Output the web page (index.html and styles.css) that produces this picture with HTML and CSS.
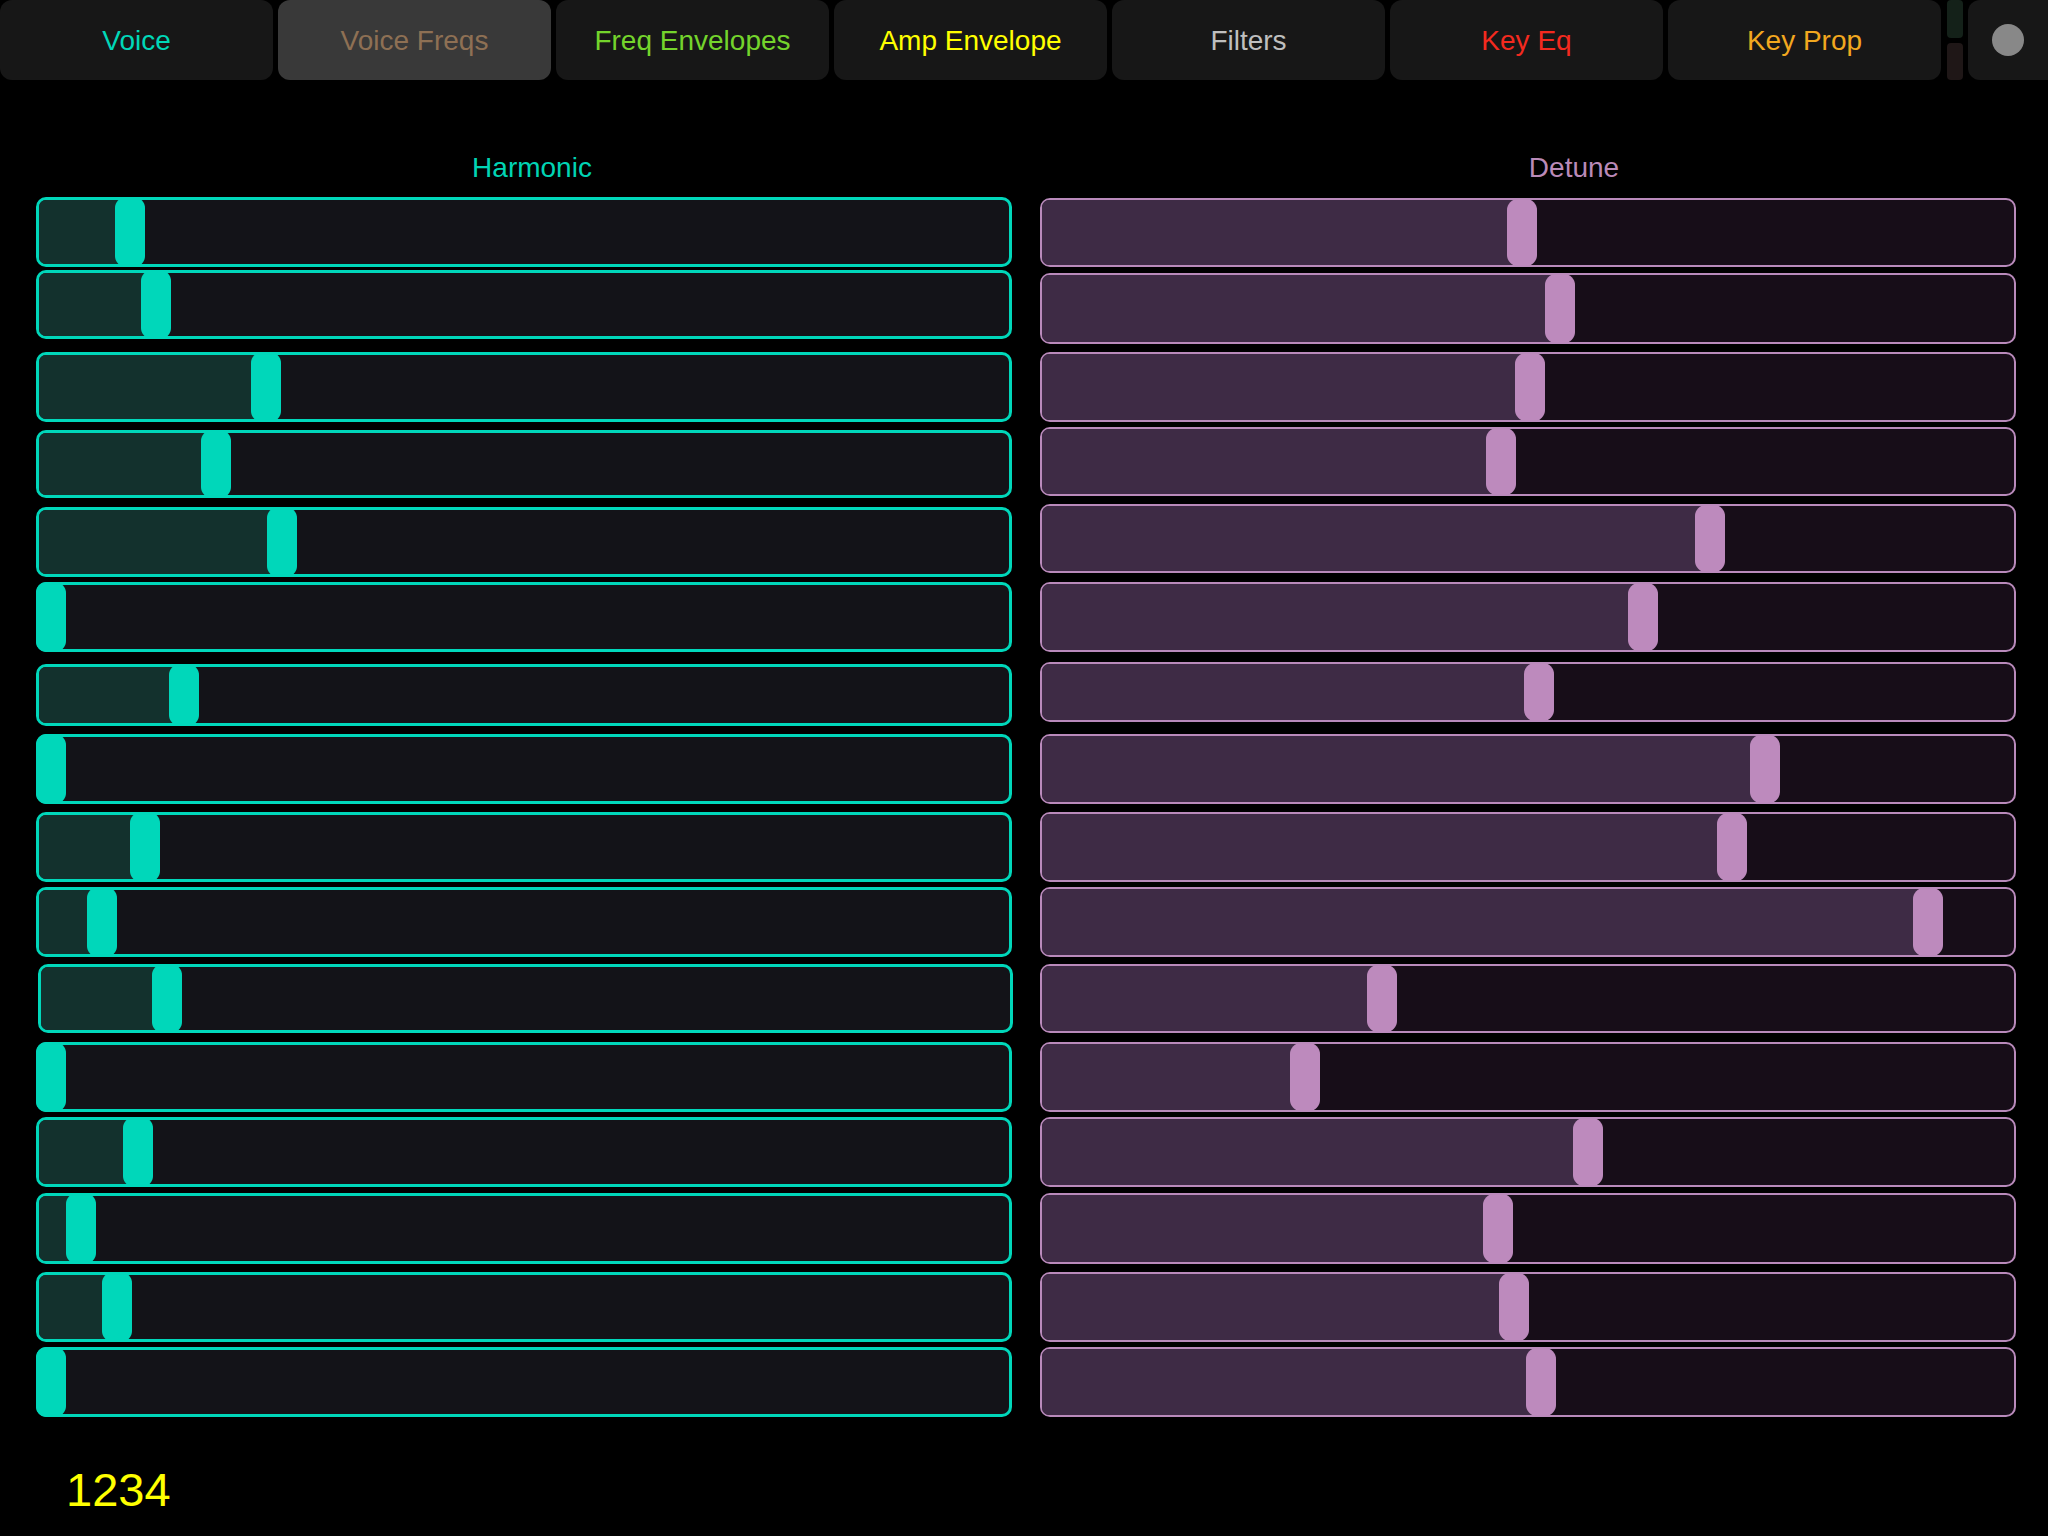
FILE: index.html
```html
<!DOCTYPE html>
<html>
<head>
<meta charset="utf-8">
<title>Voice Freqs</title>
<link rel="stylesheet" href="styles.css">
</head>
<body>
<nav class="tabs">
  <div class="tab t-voice">Voice</div>
  <div class="tab t-freqs active">Voice Freqs</div>
  <div class="tab t-fenv">Freq Envelopes</div>
  <div class="tab t-amp">Amp Envelope</div>
  <div class="tab t-filt">Filters</div>
  <div class="tab t-keq">Key Eq</div>
  <div class="tab t-kprop">Key Prop</div>
  <div class="meters"><span class="meter m-top"></span><span class="meter m-bot"></span></div>
  <div class="dotbtn"><span class="dot"></span></div>
</nav>
<main class="panel">
  <section class="col harm">
    <div class="label">Harmonic</div>
    <div class="rows">
      <div class="slider" style="--v:0.0835"><span class="fill"></span><span class="thumb"></span></div>
      <div class="slider" style="--v:0.111"><span class="fill"></span><span class="thumb"></span></div>
      <div class="slider" style="--v:0.2273"><span class="fill"></span><span class="thumb"></span></div>
      <div class="slider" style="--v:0.1739"><span class="fill"></span><span class="thumb"></span></div>
      <div class="slider" style="--v:0.2442"><span class="fill"></span><span class="thumb"></span></div>
      <div class="slider" style="--v:0"><span class="fill"></span><span class="thumb"></span></div>
      <div class="slider" style="--v:0.1406"><span class="fill"></span><span class="thumb"></span></div>
      <div class="slider" style="--v:0"><span class="fill"></span><span class="thumb"></span></div>
      <div class="slider" style="--v:0.0994"><span class="fill"></span><span class="thumb"></span></div>
      <div class="slider" style="--v:0.0539"><span class="fill"></span><span class="thumb"></span></div>
      <div class="slider" style="--v:0.1205"><span class="fill"></span><span class="thumb"></span></div>
      <div class="slider" style="--v:0"><span class="fill"></span><span class="thumb"></span></div>
      <div class="slider" style="--v:0.0924"><span class="fill"></span><span class="thumb"></span></div>
      <div class="slider" style="--v:0.0317"><span class="fill"></span><span class="thumb"></span></div>
      <div class="slider" style="--v:0.0694"><span class="fill"></span><span class="thumb"></span></div>
      <div class="slider" style="--v:0"><span class="fill"></span><span class="thumb"></span></div>
    </div>
  </section>
  <section class="col det">
    <div class="label">Detune</div>
    <div class="rows">
      <div class="slider" style="--v:0.4937"><span class="fill"></span><span class="thumb"></span></div>
      <div class="slider" style="--v:0.5338"><span class="fill"></span><span class="thumb"></span></div>
      <div class="slider" style="--v:0.5021"><span class="fill"></span><span class="thumb"></span></div>
      <div class="slider" style="--v:0.4711"><span class="fill"></span><span class="thumb"></span></div>
      <div class="slider" style="--v:0.692"><span class="fill"></span><span class="thumb"></span></div>
      <div class="slider" style="--v:0.6216"><span class="fill"></span><span class="thumb"></span></div>
      <div class="slider" style="--v:0.5111"><span class="fill"></span><span class="thumb"></span></div>
      <div class="slider" style="--v:0.75"><span class="fill"></span><span class="thumb"></span></div>
      <div class="slider" style="--v:0.7154"><span class="fill"></span><span class="thumb"></span></div>
      <div class="slider" style="--v:0.9225"><span class="fill"></span><span class="thumb"></span></div>
      <div class="slider" style="--v:0.3455"><span class="fill"></span><span class="thumb"></span></div>
      <div class="slider" style="--v:0.264"><span class="fill"></span><span class="thumb"></span></div>
      <div class="slider" style="--v:0.5636"><span class="fill"></span><span class="thumb"></span></div>
      <div class="slider" style="--v:0.4683"><span class="fill"></span><span class="thumb"></span></div>
      <div class="slider" style="--v:0.4849"><span class="fill"></span><span class="thumb"></span></div>
      <div class="slider" style="--v:0.5137"><span class="fill"></span><span class="thumb"></span></div>
    </div>
  </section>
</main>
<footer class="status">1234</footer>
</body>
</html>
```
FILE: styles.css
```css
html, body {
  margin: 0;
  padding: 0;
  background: #000;
  width: 2048px;
  height: 1536px;
  overflow: hidden;
  font-family: "Liberation Sans", Arial, sans-serif;
}

/* ---------- top tab bar ---------- */
.tabs {
  display: flex;
  gap: 5px;
  height: 80px;
}
.tab {
  flex: 0 0 273px;
  display: flex;
  align-items: center;
  justify-content: center;
  box-sizing: border-box;
  padding-top: 2px;
  background: #171717;
  border-radius: 12px;
  font-size: 28px;
}
.tab.active { background: #393939; }
.t-voice { color: #00d8b8; }
.t-freqs { color: #8e7054; }
.t-fenv { color: #74d42c; }
.t-amp { color: #ffff00; }
.t-filt { color: #bfbfbf; }
.t-keq { color: #f42a1f; }
.t-kprop { color: #f2a81f; }

.meters {
  flex: 0 0 16px;
  margin-left: 1px;
  display: flex;
  flex-direction: column;
  gap: 5px;
}
.meter {
  flex: 1;
  border-radius: 4px;
}
.m-top { background: #142119; }
.m-bot { background: #1f1717; }

.dotbtn {
  flex: 1;
  display: flex;
  align-items: center;
  justify-content: center;
  background: #171717;
  border-radius: 12px 0 0 12px;
}
.dot {
  width: 32px;
  height: 32px;
  border-radius: 50%;
  background: #888888;
}

/* ---------- slider panel ---------- */
.panel {
  display: grid;
  grid-template-columns: 976px 976px;
  column-gap: 28px;
  padding: 0 32px 0 36px;
}
.col { display: flex; flex-direction: column; }
.label {
  margin-top: 72px;
  height: 32px;
  line-height: 32px;
  font-size: 28px;
  text-align: center;
}
.harm .label { color: #00d4b4; padding-left: 16px; }
.det .label { color: #ba8ab8; padding-left: 92px; }

.rows { display: flex; flex-direction: column; }

.slider {
  --bw: 3px;
  position: relative;
  box-sizing: border-box;
  height: 70px;
  border: var(--bw) solid var(--line);
  border-radius: 10px;
  background: var(--track);
}
.harm .slider {
  --line: #00d7ba;
  --track: #131318;
  --filled: #13312d;
  --knob: #00d7ba;
}
.det .slider {
  --bw: 2px;
  --line: #b98abb;
  --track: #170d18;
  --filled: #3e2b45;
  --knob: #bd8abd;
}

.fill {
  position: absolute;
  left: 0;
  top: 0;
  bottom: 0;
  width: calc(var(--v) * (100% + 2 * var(--bw) - 30px) - var(--bw) + 15px);
  background: var(--filled);
  border-radius: 7px 0 0 7px;
}
.thumb {
  position: absolute;
  top: calc(-1 * var(--bw));
  bottom: calc(-1 * var(--bw));
  left: calc(var(--v) * (100% + 2 * var(--bw) - 30px) - var(--bw));
  width: 30px;
  background: var(--knob);
  border-radius: 11px;
}
.det .thumb { top: -1px; bottom: -1px; }

/* row spacing, left column */
.harm .slider:nth-child(1) { margin-top: 13px; }
.harm .slider:nth-child(2) { margin-top: 3px; height: 69px; }
.harm .slider:nth-child(3) { margin-top: 13px; }
.harm .slider:nth-child(4) { margin-top: 8px; height: 68px; }
.harm .slider:nth-child(5) { margin-top: 9px; }
.harm .slider:nth-child(6) { margin-top: 5px; }
.harm .slider:nth-child(7) { margin-top: 12px; height: 62px; }
.harm .slider:nth-child(8) { margin-top: 8px; }
.harm .slider:nth-child(9) { margin-top: 8px; }
.harm .slider:nth-child(10) { margin-top: 5px; }
.harm .slider:nth-child(11) { margin-top: 7px; height: 69px; margin-left: 2px; margin-right: -1px; }
.harm .slider:nth-child(12) { margin-top: 9px; }
.harm .slider:nth-child(13) { margin-top: 5px; }
.harm .slider:nth-child(14) { margin-top: 6px; height: 71px; }
.harm .slider:nth-child(15) { margin-top: 8px; }
.harm .slider:nth-child(16) { margin-top: 5px; }

/* row spacing, right column */
.det .slider:nth-child(1) { margin-top: 14px; height: 69px; }
.det .slider:nth-child(2) { margin-top: 6px; height: 71px; }
.det .slider:nth-child(3) { margin-top: 8px; }
.det .slider:nth-child(4) { margin-top: 5px; height: 69px; }
.det .slider:nth-child(5) { margin-top: 8px; height: 69px; }
.det .slider:nth-child(6) { margin-top: 9px; }
.det .slider:nth-child(7) { margin-top: 10px; height: 60px; }
.det .slider:nth-child(8) { margin-top: 12px; }
.det .slider:nth-child(9) { margin-top: 8px; }
.det .slider:nth-child(10) { margin-top: 5px; }
.det .slider:nth-child(11) { margin-top: 7px; height: 69px; }
.det .slider:nth-child(12) { margin-top: 9px; }
.det .slider:nth-child(13) { margin-top: 5px; }
.det .slider:nth-child(14) { margin-top: 6px; height: 71px; }
.det .slider:nth-child(15) { margin-top: 8px; }
.det .slider:nth-child(16) { margin-top: 5px; }

/* ---------- footer readout ---------- */
.status {
  margin: 46px 0 0 66px;
  font-size: 47px;
  line-height: 54px;
  color: #ffff00;
}
```
